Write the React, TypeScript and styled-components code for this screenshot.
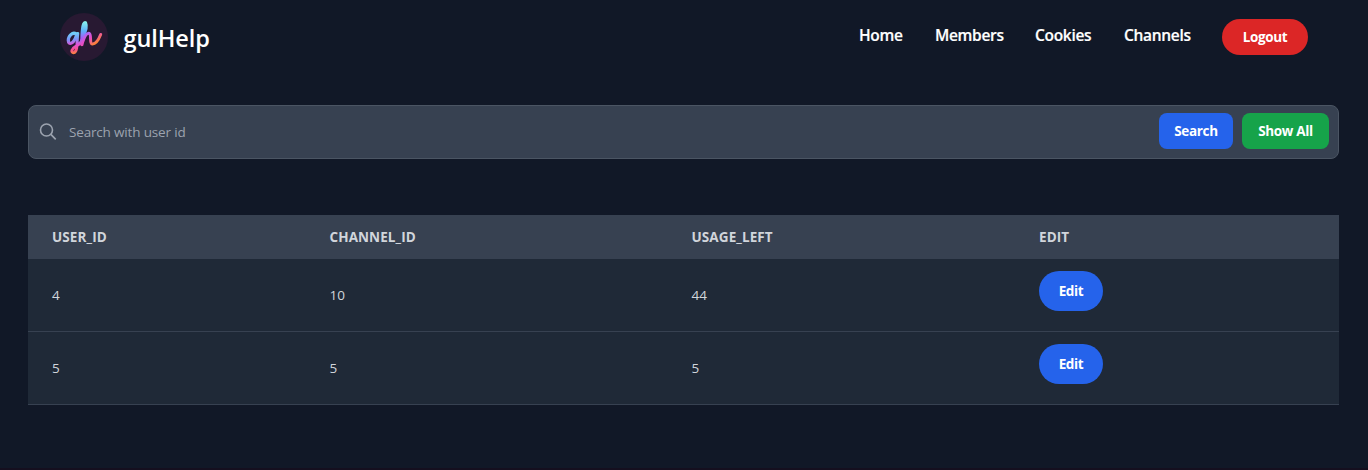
import React from "react";
import styled, { createGlobalStyle } from "styled-components";

const GlobalStyle = createGlobalStyle`
  *, *::before, *::after { box-sizing: border-box; }
  html, body { margin: 0; background: #111827; }
  body { font-family: "Segoe UI", "Open Sans", "Noto Sans", sans-serif; color: #fff; overflow: hidden; }
  button, input { font: inherit; }
`;

const Page = styled.div`
  display: flex;
  flex-direction: column;
  height: 470px;
  background: #111827;
  border-bottom: 2px solid #150f1f;
`;

const Header = styled.header`
  display: flex;
  align-items: flex-start;
  justify-content: space-between;
  height: 105px;
  padding: 13px 60px 0;
`;

const Brand = styled.a`
  display: flex;
  align-items: center;
  gap: 15.5px;
  height: 48px;
`;

const BrandName = styled.span`
  padding-top: 2px;
  font-size: 23.5px;
  line-height: 32px;
  font-weight: 600;
  letter-spacing: -0.1px;
`;

const Nav = styled.nav`
  display: grid;
  grid-template-columns: 76px 100px 89px 98px 86px;
  padding-top: 6px;
`;

const NavLink = styled.a`
  font-size: 15.5px;
  line-height: 33px;
  font-weight: 600;
  letter-spacing: -0.3px;
  -webkit-text-stroke: 0.2px currentColor;
  white-space: nowrap;
`;

const Button = styled.button<{ $bg: string; $w: number; $h?: number; $r?: number }>`
  width: ${(p) => p.$w}px;
  height: ${(p) => p.$h ?? 36}px;
  padding: 0;
  border: 0;
  border-radius: ${(p) => p.$r ?? 8}px;
  background: ${(p) => p.$bg};
  color: #fff;
  font-size: 13.5px;
  line-height: 20px;
  font-weight: 700;
  letter-spacing: -0.35px;
  white-space: nowrap;
`;

const SearchBar = styled.form`
  display: flex;
  align-items: center;
  height: 54px;
  margin: 0 29px 56px 28px;
  padding: 0 9px 2px 10px;
  border: 1px solid #4b5563;
  border-radius: 8px;
  background: #374151;
`;

const SearchInput = styled.input`
  flex: 1;
  margin-left: 12px;
  padding: 2px 0 0;
  border: 0;
  outline: 0;
  background: transparent;
  color: #fff;
  font-size: 13.5px;
  letter-spacing: -0.17px;
  &::placeholder { color: #9ca3af; opacity: 1; }
`;

const Actions = styled.div`
  display: flex;
  gap: 9px;
`;

const Table = styled.div`
  margin: 0 29px 0 28px;
  color: #d1d5db;
  font-size: 13.5px;
`;

const Row = styled.div`
  display: grid;
  grid-template-columns: 277.5px 362px 347.5px 1fr;
  height: 73px;
  padding: 0 24px;
  border-bottom: 1px solid #374151;
  background: #1f2937;
`;

const HeadRow = styled(Row)`
  height: 44px;
  border: 0;
  background: #374151;
  font-weight: 700;
  letter-spacing: 0.1px;
`;

const HeadCell = styled.div`
  line-height: 44px;
`;

const Cell = styled.div`
  line-height: 72px;
`;

const EditCell = styled.div`
  padding-top: 12px;
`;

const Logo = () => (
  <svg width="48" height="48" viewBox="0 0 48 48" fill="none">
    <defs>
      <linearGradient id="bowl" x1="13" y1="20" x2="15" y2="41" gradientUnits="userSpaceOnUse">
        <stop offset="0" stopColor="#6fd0fa" />
        <stop offset="0.3" stopColor="#7d93f8" />
        <stop offset="0.55" stopColor="#e052d8" />
        <stop offset="0.8" stopColor="#f9508a" />
        <stop offset="1" stopColor="#ff8a38" />
      </linearGradient>
      <linearGradient id="stem" x1="24" y1="8" x2="22" y2="33" gradientUnits="userSpaceOnUse">
        <stop offset="0" stopColor="#8af7ec" />
        <stop offset="0.4" stopColor="#5eaefa" />
        <stop offset="0.7" stopColor="#a65cf5" />
        <stop offset="1" stopColor="#f04bb2" />
      </linearGradient>
      <linearGradient id="tail" x1="28" y1="18" x2="37" y2="31" gradientUnits="userSpaceOnUse">
        <stop offset="0" stopColor="#a06cff" />
        <stop offset="0.45" stopColor="#e84bc4" />
        <stop offset="1" stopColor="#ff8a20" />
      </linearGradient>
    </defs>
    <circle cx="24" cy="24" r="24" fill="#281932" />
    <g strokeLinecap="round" strokeLinejoin="round">
      <path d="M16.3 21C12.5 18.5 8.3 23 8.3 27.5C8.5 32.5 13.5 31 16.3 23" stroke="url(#bowl)" strokeWidth="3.3" />
      <path d="M17.8 20.5C16.8 26 18 38.5 14 39.6C10.5 40 11.5 35.5 15.5 33.5C19.5 31.5 21 30 22 27" stroke="url(#bowl)" strokeWidth="3" />
      <path d="M22.5 24C25.5 19 26.8 13 25.4 9.8C22.6 9 22 20 21.9 31.5" stroke="url(#stem)" strokeWidth="3.4" />
      <path d="M22.5 29.5C24.5 23.5 27 19.8 29.2 20.4C31.8 21.5 29.2 30.7 32.2 31C35.3 31.2 38.5 27 40.7 21.5" stroke="url(#tail)" strokeWidth="3" />
    </g>
  </svg>
);

const SearchIcon = () => (
  <svg width="18" height="18" viewBox="0 0 18 18" fill="none" stroke="#9ca3af" strokeWidth="1.6">
    <circle cx="7.5" cy="8" r="6" />
    <path d="M11.9 12.4L16.7 17.4" />
  </svg>
);

const links = ["Home", "Members", "Cookies", "Channels"];
const rows = [
  ["4", "10", "44"],
  ["5", "5", "5"],
];

export default function App() {
  return (
    <Page>
      <GlobalStyle />
      <Header>
        <Brand>
          <Logo />
          <BrandName>gulHelp</BrandName>
        </Brand>
        <Nav>
          {links.map((l) => (
            <NavLink key={l}>{l}</NavLink>
          ))}
          <Button $bg="#dc2626" $w={86} $r={18}>Logout</Button>
        </Nav>
      </Header>
      <SearchBar>
        <SearchIcon />
        <SearchInput placeholder="Search with user id" />
        <Actions>
          <Button type="button" $bg="#2563eb" $w={74}>Search</Button>
          <Button type="button" $bg="#16a34a" $w={87}>Show All</Button>
        </Actions>
      </SearchBar>
      <Table>
        <HeadRow>
          {["USER_ID", "CHANNEL_ID", "USAGE_LEFT", "EDIT"].map((h) => (
            <HeadCell key={h}>{h}</HeadCell>
          ))}
        </HeadRow>
        {rows.map((r) => (
          <Row key={r[0]}>
            {r.map((v, i) => (
              <Cell key={i}>{v}</Cell>
            ))}
            <EditCell>
              <Button $bg="#2563eb" $w={64} $h={40} $r={20}>Edit</Button>
            </EditCell>
          </Row>
        ))}
      </Table>
    </Page>
  );
}
